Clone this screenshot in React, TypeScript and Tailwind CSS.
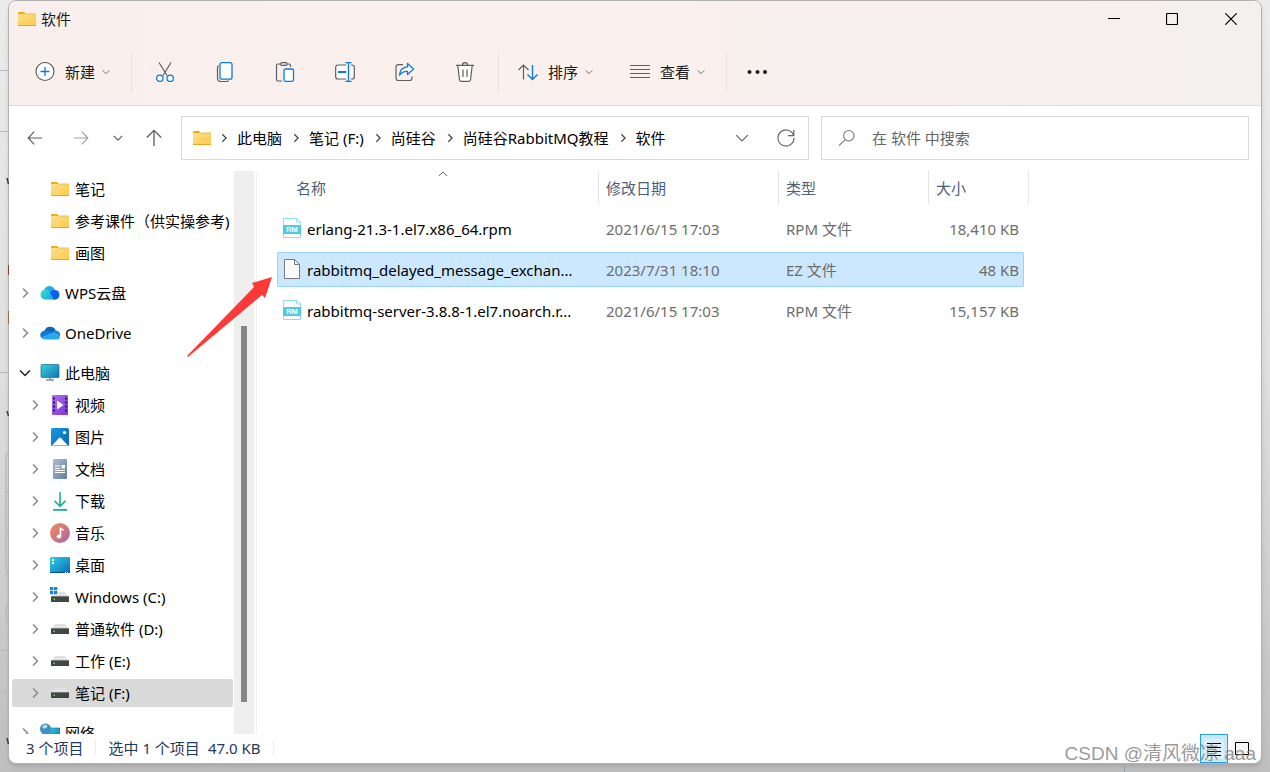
import type { ReactNode } from "react";

type SvgProps = { className?: string; children: ReactNode; box?: string };

function Svg({ className = "size-5", children, box = "0 0 20 20" }: SvgProps) {
  return (
    <svg viewBox={box} className={`shrink-0 ${className}`} fill="none" aria-hidden="true">
      {children}
    </svg>
  );
}

function Chevron({ dir, className, width = 1.2 }: { dir: "right" | "down" | "up"; className: string; width?: number }) {
  const d = { right: "M4 1.5 8.5 6 4 10.5", down: "M1 3.5 6 8.5 11 3.5", up: "M1 8.5 6 3.5 11 8.5" }[dir];
  return (
    <Svg box="0 0 12 12" className={className}>
      <path d={d} stroke="currentColor" strokeWidth={width} />
    </Svg>
  );
}

const GRAY = "#5f5f5f";
const BLUE = "#0b7bd6";

const FolderIcon = () => (
  <Svg>
    <path d="M1 4.2Q1 3 2.2 3H7l1.6 1.8V8H1Z" fill="#f6a90f" />
    <rect x="1" y="5" width="18" height="12" rx=".6" fill="url(#folder)" />
    <path d="M1 16.5h18" stroke="#eaa521" />
    <path d="M8 5h11" stroke="#e9b13e" strokeWidth=".8" />
  </Svg>
);

const WpsIcon = () => (
  <Svg>
    <circle cx="9.5" cy="8.5" r="5.5" fill="#22a7f5" />
    <circle cx="14.6" cy="11.8" r="4.9" fill="#0b62e8" />
    <path d="M5.5 6.6a5 5 0 0 0 0 10H14L8.6 7.8a5 5 0 0 0-3.1-1.2Z" fill="url(#wps)" />
  </Svg>
);

const OneDriveIcon = () => (
  <Svg>
    <path d="M4.5 8A6 6 0 0 1 15.8 7.600L10 12Z" fill="#0a63b8" />
    <path d="M4.700 7.500a4.600 4.600 0 0 0-3.500 7.300L12.500 10 9 8.100a8 8 0 0 0-4.300-.6Z" fill="#0f78d4" />
    <path d="M15.500 7.600a4 4 0 0 0-3.400 2L20 13.500a4.300 4.300 0 0 0-4.500-5.900Z" fill="#1490df" />
    <path d="M1.200 14.700 11 10q1-.5 2 0l7 3.500a3.300 3.300 0 0 1-3.200 3H4.800a4.500 4.500 0 0 1-3.600-1.800Z" fill="#28a8ea" />
  </Svg>
);

const PcIcon = () => (
  <Svg>
    <rect x="1" y="1.500" width="18" height="13" rx=".7" fill="url(#screen)" stroke="#176a86" strokeWidth=".7" />
    <path d="M9 15h2v1.500H9Z" fill="#9aa4aa" />
    <path d="M6 17h8" stroke="#657077" strokeWidth="1.200" />
  </Svg>
);

const VideoIcon = () => (
  <Svg>
    <rect x="2" y="0" width="16" height="20" rx="1" fill="url(#video)" />
    <path d="M4 2.500v16M16 2.500v16" stroke="#3b1763" strokeWidth="2" strokeDasharray="2 2" />
    <path d="M7 5.500 13.500 10 7 14.500Z" fill="#fff" />
  </Svg>
);

const PictureIcon = () => (
  <Svg>
    <rect x="1" y="1" width="18" height="18" rx="1.500" fill="url(#picture)" />
    <path d="M2 18.500 9 11q1-1 2 0l7 7.500Z" fill="#fff" />
    <circle cx="14.500" cy="5.500" r="1.600" fill="#fff" />
  </Svg>
);

const DocumentIcon = () => (
  <Svg>
    <rect x="3" y="0" width="14" height="20" rx="1" fill="url(#document)" />
    <path d="M5 7h5M5 9.500h5M5 11.500h10M5 13.500h10" stroke="#fff" />
    <rect x="11.500" y="6" width="3.500" height="3.500" fill="#fff" />
  </Svg>
);

const DownloadIcon = () => (
  <Svg>
    <path d="M10 1v14M4.500 9.800 10 15.300l5.500-5.500M3 18.800h14" stroke="url(#download)" strokeWidth="1.700" />
  </Svg>
);

const MusicIcon = () => (
  <Svg>
    <circle cx="10" cy="10" r="10" fill="url(#music)" />
    <ellipse cx="8.900" cy="13.500" rx="2.300" ry="1.900" fill="#fff" />
    <path d="M10.400 13.500V4.800q.8 2 3.300 2.200" stroke="#fff" strokeWidth="1.600" />
  </Svg>
);

const DesktopIcon = () => (
  <Svg>
    <rect x="0" y="2" width="20" height="16" rx="1" fill="url(#desktop)" />
    <path d="M0 17h20v.5q0 .5-1 .5H1q-1 0-1-.5Z" fill="#0b4d86" />
    <path d="M2 4h2v2H2zM2 7h2v2H2z" fill="#fff" />
    <path d="M15 17.500h1M17 17.500h1" stroke="#fff" />
  </Svg>
);

function DriveIcon({ system = false }: { system?: boolean }) {
  return (
    <Svg>
      <path d="M5 5h10L19 11H1Z" fill="#dfe1e3" />
      <rect x="1" y="9" width="18" height="6" rx=".6" fill="#454545" />
      <path d="M1 9.500h18" stroke="#777" />
      <rect x="3.500" y="11.500" width="1.500" height="1.500" fill="#3cf03c" />
      {system && (
        <>
          <path d="M0 0h8v8H0z" fill="#fff" />
          <path d="M0 0h3.300v3.300H0zM4 0h3.300v3.300H4zM0 4h3.300v3.300H0zM4 4h3.300v3.300H4z" fill="#0d86dc" />
        </>
      )}
    </Svg>
  );
}

const NetworkIcon = () => (
  <Svg>
    <rect x="7" y="5" width="13" height="10" fill="url(#screen)" stroke="#176a86" strokeWidth=".6" />
    <circle cx="5.500" cy="6" r="5.500" fill="#3d8fc4" />
    <path d="M2.500 3q3-3 5 0Q7 6 4 5.500 2 5 2.500 3Z" fill="#b8dff1" />
  </Svg>
);

const RpmIcon = () => (
  <Svg>
    <path d="M1.500.5h13.500l3.500 3.500v15.500h-17Z" fill="#fff" stroke="#8fdcec" />
    <path d="M14.500.5V4h4" stroke="#8fdcec" />
    <rect x="1" y="7" width="18" height="9" fill="#55c8e2" />
    <text x="10" y="14.200" textAnchor="middle" fontSize="7.500" fontWeight="700" fill="#fff" fontFamily="Liberation Sans, sans-serif">
      RM
    </text>
  </Svg>
);

const FileIcon = () => (
  <Svg>
    <path d="M2.500.5h10l5 5v14h-15Z" fill="#fafafa" stroke="#777" />
    <path d="M12.500.5v5h5" stroke="#777" />
  </Svg>
);

function Gradients() {
  const list: [string, string, string][] = [
    ["folder", "#ffe08a", "#fdc94a"],
    ["wps", "#35e5c5", "#1a9cf2"],
    ["screen", "#35d6de", "#1173b5"],
    ["video", "#b06cf0", "#7c35d8"],
    ["picture", "#189ae2", "#0a62b5"],
    ["document", "#aebfd4", "#5f7da3"],
    ["download", "#3cc98a", "#0b9fa8"],
    ["music", "#f58f55", "#a861ac"],
    ["desktop", "#2fd3dd", "#0c69bf"],
  ];
  return (
    <svg className="absolute size-0" aria-hidden="true">
      <defs>
        {list.map(([id, a, b]) => (
          <linearGradient key={id} id={id} x1="0" y1="0" x2="1" y2="1">
            <stop stopColor={a} />
            <stop offset="1" stopColor={b} />
          </linearGradient>
        ))}
      </defs>
    </svg>
  );
}

const actions: { label: string; icon: ReactNode }[] = [
  {
    label: "剪切",
    icon: (
      <>
        <path d="m4 0.500 8 13M16 0.500l-8 13" stroke={GRAY} strokeWidth="1.200" />
        <circle cx="4.800" cy="16.300" r="3.200" stroke={BLUE} strokeWidth="1.300" fill="#fff" />
        <circle cx="15.200" cy="16.300" r="3.200" stroke={BLUE} strokeWidth="1.300" fill="#fff" />
      </>
    ),
  },
  {
    label: "复制",
    icon: (
      <>
        <path d="M3.500 3.500Q2.500 4 2.500 6v10q0 3.500 3.500 3.500h5.500q1.500 0 2-1" stroke={GRAY} strokeWidth="1.200" />
        <rect x="5" y=".7" width="12" height="16.500" rx="2" stroke={BLUE} strokeWidth="1.300" fill="#fff" />
      </>
    ),
  },
  {
    label: "粘贴",
    icon: (
      <>
        <path d="M5.500 2H3Q1.500 2 1.500 3.500v14Q1.500 19 3 19h4M11.500 2H14q1.500 0 1.500 1.500V5" stroke={GRAY} strokeWidth="1.200" />
        <rect x="5.500" y=".6" width="6.500" height="2.800" rx="1.400" stroke={GRAY} strokeWidth="1.100" />
        <rect x="9" y="7" width="9.500" height="12.300" rx="1.500" stroke={BLUE} strokeWidth="1.300" fill="#fff" />
      </>
    ),
  },
  {
    label: "重命名",
    icon: (
      <>
        <path d="M11 3H3Q.7 3 .7 5.300v9.400Q.7 17 3 17h8M16 3h1q2.300 0 2.300 2.300v9.400Q19.300 17 17 17h-1" stroke={GRAY} strokeWidth="1.200" fill="#fff" />
        <path d="M3 10h8" stroke={BLUE} strokeWidth="2" />
        <path d="M13.500.6v18.800M10.500.6h6M10.500 19.400h6" stroke={BLUE} strokeWidth="1.300" />
      </>
    ),
  },
  {
    label: "共享",
    icon: (
      <>
        <path d="M8 2.600H3.500Q1 2.600 1 5v11q0 2.500 2.500 2.500h11Q17 18.500 17 16v-1.500" stroke={GRAY} strokeWidth="1.200" />
        <path d="M12.500 1.500 18.500 7l-6 5.500V9.300Q7.500 9 4.500 13 5 5.500 12.500 4.800Z" stroke={BLUE} strokeWidth="1.300" strokeLinejoin="round" fill="#fff" />
      </>
    ),
  },
  {
    label: "删除",
    icon: (
      <>
        <path d="M2.800 3.500 4.500 18q.2 1.300 1.500 1.300h8q1.300 0 1.500-1.300l1.700-14.500" stroke={GRAY} strokeWidth="1.200" fill="#fff" />
        <path d="M1 3.300h18M7.500 3Q7.500.6 10 .6T12.500 3M8 7.500V15M12 7.500V15" stroke={GRAY} strokeWidth="1.200" />
      </>
    ),
  },
];

function MenuButton({ icon, label }: { icon: ReactNode; label: string }) {
  return (
    <button type="button" className="flex items-center">
      {icon}
      <span className="ml-2.5 mr-[7px]">{label}</span>
      <Chevron dir="down" className="size-2 text-[#777]" width={1.5} />
    </button>
  );
}

const Divider = () => <span className="h-10 w-px bg-[#e9e0de]" />;

function TitleBar() {
  return (
    <header className="shrink-0 border-b border-[#e5dcda] bg-linear-to-r from-[#f9efed] via-[#faf0ee] to-[#f4f0ee]">
      <div className="mb-0.5 flex h-9 items-center pl-2">
        <FolderIcon />
        <h1 className="ml-1 grow">软件</h1>
        <button type="button" aria-label="最小化" className="flex h-full w-[58px] items-center justify-center">
          <Svg box="0 0 12 12" className="size-3"><path d="M0 5.500h12" stroke="#000" /></Svg>
        </button>
        <button type="button" aria-label="最大化" className="flex h-full w-[58px] items-center justify-center">
          <Svg box="0 0 12 12" className="size-3"><rect x=".5" y=".5" width="11" height="11" rx="1" stroke="#000" strokeWidth="1.200" /></Svg>
        </button>
        <button type="button" aria-label="关闭" className="flex h-full w-[60px] items-center justify-center">
          <Svg box="0 0 12 12" className="size-3"><path d="m.3.3 11.400 11.400M11.700.3.3 11.700" stroke="#000" strokeWidth="1.200" /></Svg>
        </button>
      </div>
      <div className="flex h-[66px] items-center pl-[26px]">
        <MenuButton
          label="新建"
          icon={
            <Svg>
              <circle cx="10" cy="9.500" r="9" stroke={GRAY} strokeWidth="1.200" fill="#fff" />
              <path d="M5.500 9.500h9M10 5v9" stroke={BLUE} strokeWidth="1.300" />
            </Svg>
          }
        />
        <span className="ml-[21px] mr-[3px] flex"><Divider /></span>
        {actions.map((a) => (
          <button key={a.label} type="button" aria-label={a.label} className="flex h-10 w-[60px] items-center justify-center">
            <Svg>{a.icon}</Svg>
          </button>
        ))}
        <span className="ml-[3px] mr-[19px] flex"><Divider /></span>
        <MenuButton
          label="排序"
          icon={
            <Svg>
              <path d="M5.500 17.500V3M.5 8l5-5 5 5" stroke={GRAY} strokeWidth="1.200" />
              <path d="M14.500 3v14.500M9.500 12.500l5 5 5-5" stroke={BLUE} strokeWidth="1.400" />
            </Svg>
          }
        />
        <span className="w-[37px]" />
        <MenuButton
          label="查看"
          icon={<Svg><path d="M0 3.500h20M0 7.500h20M0 11.500h20M0 15.500h20" stroke={GRAY} /></Svg>}
        />
        <span className="ml-[21px] mr-5 flex"><Divider /></span>
        <button type="button" aria-label="更多" className="flex items-center">
          <Svg className="size-5">
            <circle cx="2.500" cy="10" r="2" fill="#1a1a1a" />
            <circle cx="10.500" cy="10" r="2" fill="#1a1a1a" />
            <circle cx="18" cy="10" r="2" fill="#1a1a1a" />
          </Svg>
        </button>
      </div>
    </header>
  );
}

const crumbs = ["此电脑", "笔记 (F:)", "尚硅谷", "尚硅谷RabbitMQ教程", "软件"];

function AddressBar() {
  return (
    <div className="flex h-16 shrink-0 items-center pl-[18px] pr-3">
      <nav aria-label="导航" className="flex w-[154px] shrink-0 items-center">
        <button type="button" aria-label="后退" className="text-[#5f5f5f]">
          <Svg className="size-4"><path d="M19 10H1.500M9 2 1.500 10 9 18" stroke="currentColor" strokeWidth="1.500" /></Svg>
        </button>
        <button type="button" aria-label="前进" className="ml-[30px] text-[#a0a0a0]">
          <Svg className="size-4"><path d="M1 10h17.500M11 2l7.500 8-7.500 8" stroke="currentColor" strokeWidth="1.500" /></Svg>
        </button>
        <button type="button" aria-label="最近位置" className="ml-6 text-[#5f5f5f]">
          <Chevron dir="down" className="size-2.5" width={1.500} />
        </button>
        <button type="button" aria-label="向上" className="ml-[22px] text-[#5f5f5f]">
          <Svg className="size-[18px]"><path d="M10 19V1.500M2 9.500l8-8 8 8" stroke="currentColor" strokeWidth="1.500" /></Svg>
        </button>
      </nav>
      <div className="flex h-11 min-w-0 flex-[616_1_0%] items-center border border-[#d9d9d9] pl-2.5">
        <FolderIcon />
        {crumbs.map((c, i) => (
          <span key={c} className="flex items-center whitespace-nowrap">
            <Chevron dir="right" className={`mr-2 size-2.5 text-[#444] ${i ? "ml-[9px]" : "ml-[7px]"}`} width={1.500} />
            <a href="#" className="text-black">{c}</a>
          </span>
        ))}
        <button type="button" aria-label="历史记录" className="ml-auto mr-[27px] text-[#666]">
          <Chevron dir="down" className="size-3.5" width={1} />
        </button>
        <button type="button" aria-label="刷新" className="mr-3 text-[#666]">
          <Svg className="size-5">
            <path d="M17.600 7.500A8 8 0 1 0 18 10M17.800 2v5.600h-5.600" stroke="currentColor" strokeWidth="1.200" />
          </Svg>
        </button>
      </div>
      <label className="ml-3 flex h-11 min-w-0 flex-[410_1_0%] items-center border border-[#d9d9d9] pl-4">
        <Svg className="size-[18px]">
          <circle cx="12" cy="7.500" r="5.800" stroke="#777" strokeWidth="1.200" />
          <path d="M8 12 1 18.500" stroke="#777" strokeWidth="1.200" />
        </Svg>
        <input
          type="search"
          aria-label="在 软件 中搜索"
          placeholder="在 软件 中搜索"
          className="ml-4 min-w-0 grow bg-transparent outline-none placeholder:text-[#666]"
        />
      </label>
    </div>
  );
}

type Node = { label: string; icon: ReactNode; open?: boolean; leaf?: boolean; child?: boolean; selected?: boolean };

const tree: Node[][] = [
  [
    { label: "笔记", icon: <FolderIcon />, leaf: true, child: true },
    { label: "参考课件（供实操参考)", icon: <FolderIcon />, leaf: true, child: true },
    { label: "画图", icon: <FolderIcon />, leaf: true, child: true },
  ],
  [{ label: "WPS云盘", icon: <WpsIcon /> }],
  [{ label: "OneDrive", icon: <OneDriveIcon /> }],
  [
    { label: "此电脑", icon: <PcIcon />, open: true },
    { label: "视频", icon: <VideoIcon />, child: true },
    { label: "图片", icon: <PictureIcon />, child: true },
    { label: "文档", icon: <DocumentIcon />, child: true },
    { label: "下载", icon: <DownloadIcon />, child: true },
    { label: "音乐", icon: <MusicIcon />, child: true },
    { label: "桌面", icon: <DesktopIcon />, child: true },
    { label: "Windows (C:)", icon: <DriveIcon system />, child: true },
    { label: "普通软件 (D:)", icon: <DriveIcon />, child: true },
    { label: "工作 (E:)", icon: <DriveIcon />, child: true },
    { label: "笔记 (F:)", icon: <DriveIcon />, child: true, selected: true },
  ],
  [{ label: "网络", icon: <NetworkIcon /> }],
];

function TreeRow({ node }: { node: Node }) {
  return (
    <li className="px-[3px] py-0.5">
      <button
        type="button"
        className={`flex h-7 w-[221px] items-center rounded-xs whitespace-nowrap text-black ${node.child ? "pl-[17px]" : "pl-[7px]"} ${node.selected ? "bg-[#d9d9d9]" : ""}`}
      >
        <span className="mr-[9px] flex size-3 shrink-0 items-center">
          {!node.leaf && (
            <Chevron dir={node.open ? "down" : "right"} className={node.open ? "size-3 text-[#222]" : "size-3 text-[#8a8a8a]"} width={1.500} />
          )}
        </span>
        {node.icon}
        <span className="ml-[5px]">{node.label}</span>
      </button>
    </li>
  );
}

function Sidebar() {
  return (
    <aside className="flex w-[248px] shrink-0 border-r border-[#f2f2f2]">
      <div className="w-[225px] overflow-hidden pt-0.5">
        {tree.map((group, i) => (
          <ul key={i} className="mb-2">
            {group.map((n) => <TreeRow key={n.label} node={n} />)}
          </ul>
        ))}
      </div>
      <div className="flex w-5 flex-col items-center bg-[#efefef]">
        <span className="grow-[155]" />
        <span className="w-1.5 grow-[376] bg-[#858585]" />
        <span className="grow-[32]" />
      </div>
    </aside>
  );
}

const files = [
  { name: "erlang-21.3-1.el7.x86_64.rpm", date: "2021/6/15 17:03", type: "RPM 文件", size: "18,410 KB", icon: <RpmIcon />, selected: false },
  { name: "rabbitmq_delayed_message_exchan...", date: "2023/7/31 18:10", type: "EZ 文件", size: "48 KB", icon: <FileIcon />, selected: true },
  { name: "rabbitmq-server-3.8.8-1.el7.noarch.r...", date: "2021/6/15 17:03", type: "RPM 文件", size: "15,157 KB", icon: <RpmIcon />, selected: false },
];

function FileTable() {
  const head = "flex h-[33px] items-center border-r border-[#e5e5e5] pl-[7px] font-normal text-[#4c607a]";
  return (
    <table className="ml-5 w-[752px] table-fixed border-separate border-spacing-0 self-start text-left">
      <colgroup>
        <col className="w-[322px]" />
        <col className="w-[180px]" />
        <col className="w-[150px]" />
        <col className="w-[100px]" />
      </colgroup>
      <thead>
        <tr>
          <th className="p-0 pb-1" aria-sort="ascending">
            <div className={`relative ${head}`}>
              <span className="ml-3">名称</span>
              <span className="absolute left-[161px] -top-0.5">
                <Chevron dir="up" className="size-2.5 text-[#666]" />
              </span>
            </div>
          </th>
          <th className="p-0 pb-1"><div className={head}>修改日期</div></th>
          <th className="p-0 pb-1"><div className={head}>类型</div></th>
          <th className="p-0 pb-1"><div className={head}>大小</div></th>
        </tr>
      </thead>
      <tbody className="whitespace-nowrap text-[#6d6d6d]">
        {files.map((f) => {
          const cell = `flex h-[35px] items-center border-y ${f.selected ? "border-[#99d1ff] bg-[#cce8ff]" : "border-transparent"}`;
          return (
            <tr key={f.name} aria-selected={f.selected}>
              <td className="p-0 py-[3px]">
                <div className={`${cell} rounded-l-xs border-l pl-1 text-black`}>
                  <span className="pb-0.5">{f.icon}</span>
                  <span className="ml-[5px]">{f.name}</span>
                </div>
              </td>
              <td className="p-0 py-[3px]"><div className={`${cell} pl-[7px]`}>{f.date}</div></td>
              <td className="p-0 py-[3px]"><div className={`${cell} pl-[7px]`}>{f.type}</div></td>
              <td className="p-0 py-[3px] pr-[5px]"><div className={`${cell} justify-end rounded-r-xs border-r pr-1`}>{f.size}</div></td>
            </tr>
          );
        })}
      </tbody>
    </table>
  );
}

function StatusBar() {
  return (
    <footer className="flex h-[29px] shrink-0 items-center pl-[17px] pr-[5px] text-[#1f3a5f]">
      <div className="flex items-center pb-0.5">
        <span>3 个项目</span>
        <span className="mx-3 h-4 w-px bg-[#eeeeee]" />
        <span>选中 1 个项目</span>
        <span className="ml-2">47.0 KB</span>
        <span className="ml-3 h-4 w-px bg-[#eeeeee]" />
      </div>
      <button type="button" aria-label="详细信息" className="ml-auto flex h-full w-7 items-center justify-center border border-[#26a0da] bg-[#cbe8f6]">
        <Svg className="size-5 bg-[#dceff8]"><path d="M3 4.500h14M3 8.500h14M3 12.500h14M3 16.500h14" stroke="#000" /></Svg>
      </button>
      <button type="button" aria-label="大图标" className="flex h-full w-7 items-center justify-center">
        <Svg className="size-5 bg-[#f5f5f5]"><path d="M3.500 3.500h13v12h-13Z" stroke="#000" /></Svg>
      </button>
    </footer>
  );
}

function Backdrop() {
  return (
    <div className="pointer-events-none absolute inset-0" aria-hidden="true">
      <Svg box="0 0 9 772" className="absolute left-0 top-0 h-[772px] w-[9px]">
        <path d="M0 70.500h8M0 131.500h8M0 372.500h8M0 650.500h8M0 691.500h8" stroke="#b4bac2" />
        <path d="M8 451q-2 2-2 6v112q0 4 2 6M6 492h2M6 533h2M8 604q-4 9 0 19" stroke="#aeb4bb" />
        <path d="m7 178 1.500 6M7 411l1.500 5M7 738l1.500 6" stroke="#4a3526" strokeWidth="1.500" />
        <path d="M8.500 265v10" stroke="#8c3a3a" />
        <path d="M8.500 311v13" stroke="#a36a3a" />
      </Svg>
      <span className="absolute bottom-0 right-[145px] h-2 w-px bg-[#9aa0a8]" />
    </div>
  );
}

export default function App() {
  return (
    <div className="relative flex h-screen flex-col overflow-hidden bg-linear-to-b from-[#ececec] via-[#dedede] to-[#bfbfbf] px-2 pb-2 font-['Noto_Sans','Noto_Sans_CJK_SC',sans-serif] text-[15px] leading-5 text-[#1a1a1a]">
      <Gradients />
      <main className="relative flex min-h-0 grow flex-col overflow-hidden rounded-lg border border-[#b3b1b1] bg-white shadow-md">
        <TitleBar />
        <AddressBar />
        <div className="flex min-h-0 flex-1 pt-px">
          <Sidebar />
          <FileTable />
        </div>
        <StatusBar />
      </main>
      <Backdrop />
      <svg viewBox="0 0 86 82" className="pointer-events-none absolute left-[187px] top-[276px] h-[82px] w-[86px]" aria-hidden="true">
        <path d="M0 80 67 11 65 7 85 1 78 22 75 19 1 81Z" fill="#fd3a37" />
      </svg>
      <p className="pointer-events-none absolute bottom-1 right-3.5 font-['Liberation_Sans','Noto_Sans_CJK_SC',sans-serif] text-[19px] leading-7 text-[#808080]/80">
        CSDN @清风微凉 aaa
      </p>
    </div>
  );
}
